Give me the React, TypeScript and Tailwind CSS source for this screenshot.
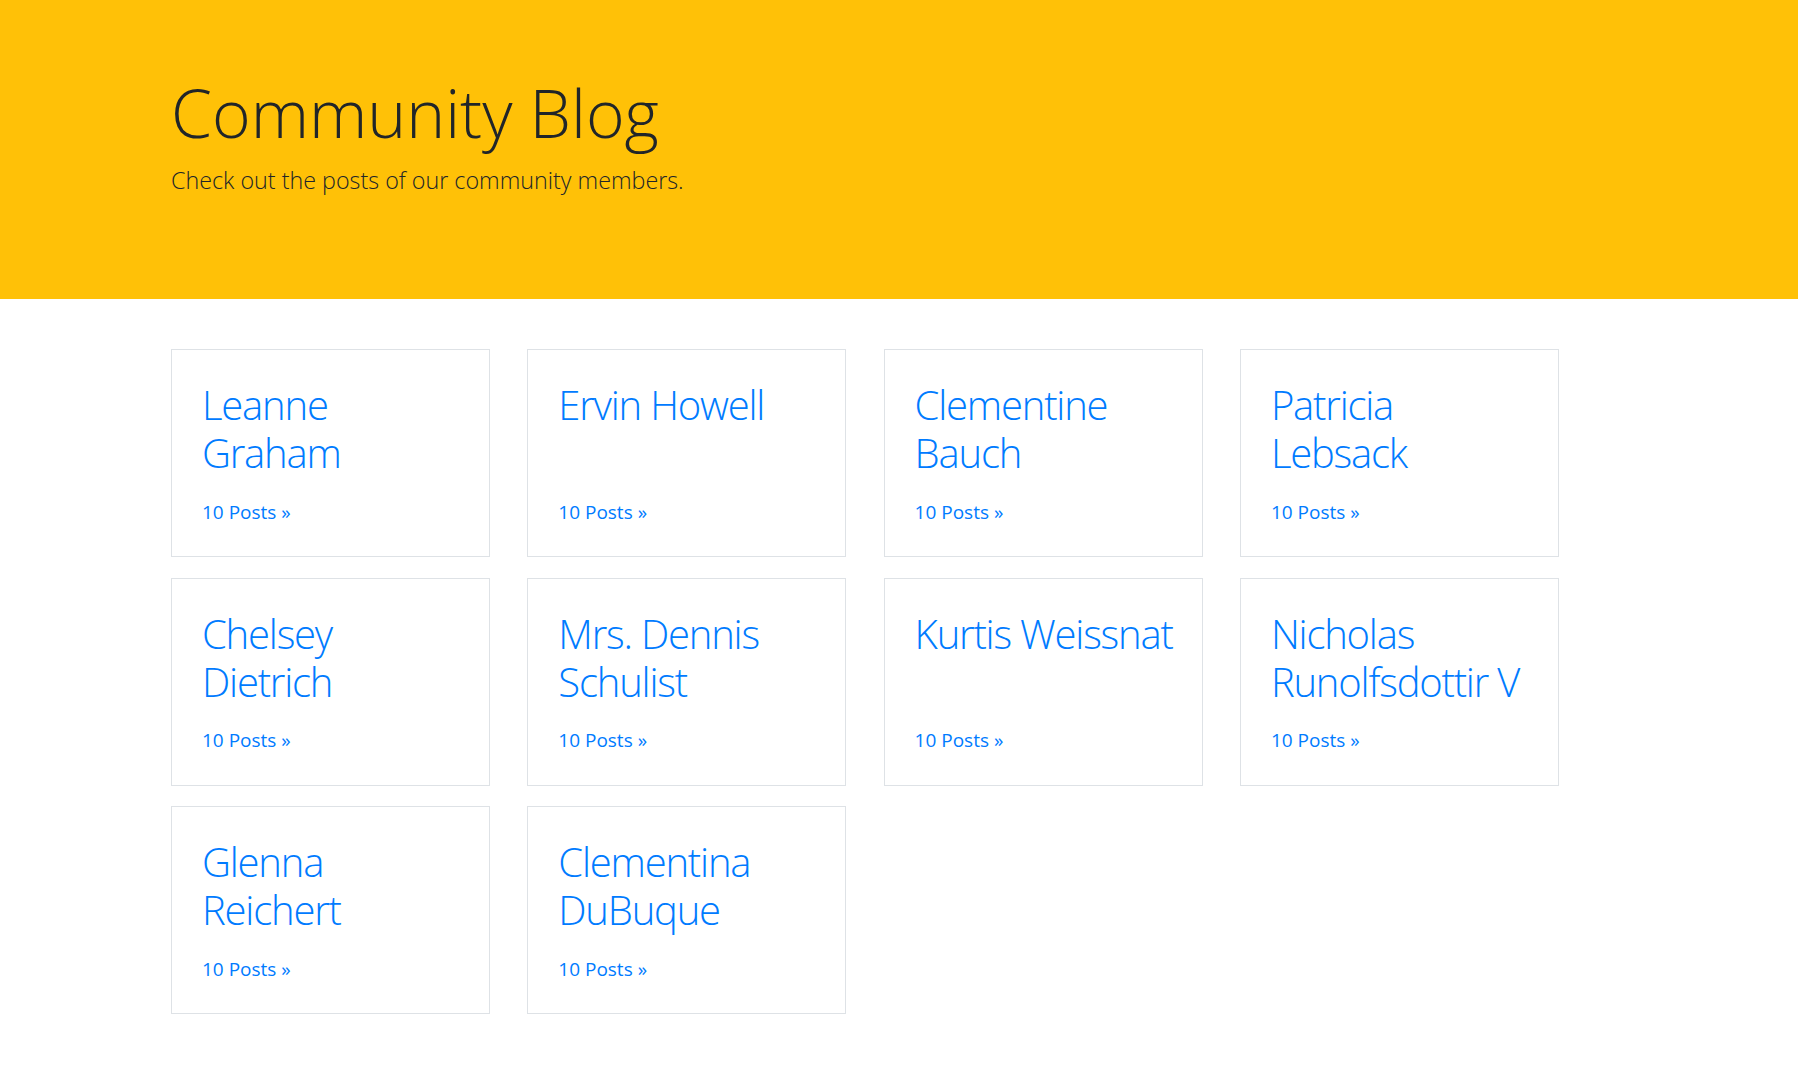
const users = [
  "Leanne Graham",
  "Ervin Howell",
  "Clementine Bauch",
  "Patricia Lebsack",
  "Chelsey Dietrich",
  "Mrs. Dennis Schulist",
  "Kurtis Weissnat",
  "Nicholas Runolfsdottir V",
  "Glenna Reichert",
  "Clementina DuBuque",
];

const App = () => {
  return (
    <div className="min-h-screen bg-white font-['Open_Sans',sans-serif] text-[#212529]">
      <header className="h-[299px] bg-[#ffc107] pl-[171px] pt-[73px]">
        <h1 className="text-[66px] font-light leading-[1.2]">Community Blog</h1>
        <p className="mt-[11px] text-[23.3px] font-light leading-[1.5]">
          Check out the posts of our community members.
        </p>
      </header>

      <main className="pl-[171px] pt-[50px] pb-[40px]">
        <div className="grid grid-cols-[repeat(4,319px)] gap-x-[37.3px] gap-y-[20.5px]">
          {users.map((name) => (
            <div
              key={name}
              className="flex h-[208px] flex-col border border-[#dee2e6] p-[30px] pt-[31px]"
            >
              <h2 className="-mr-[10px] text-[40px] font-light leading-[1.2] tracking-[-1.2px] text-[#007bff]">
                {name}
              </h2>
              <a href="#" className="mt-auto text-[19px] leading-[1.5] text-[#007bff]">
                10 Posts »
              </a>
            </div>
          ))}
        </div>
      </main>
    </div>
  );
};

export default App;
